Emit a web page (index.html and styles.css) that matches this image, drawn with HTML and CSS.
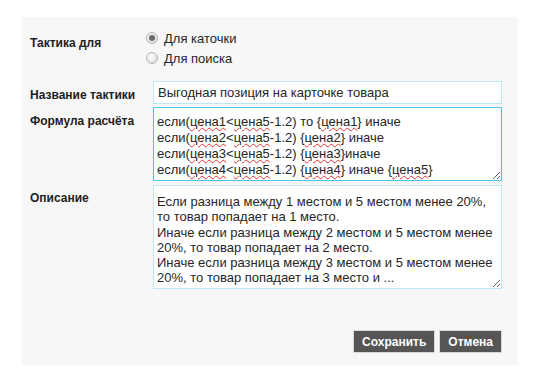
FILE: index.html
```html
<!DOCTYPE html>
<html lang="ru">
<head>
    <meta charset="UTF-8">
    <title>Тактика</title>
    <link rel="stylesheet" href="styles.css">
</head>
<body>
    <div class="panel">
        <form class="tactic-form">
            <div class="form-row">
                <div class="form-label label-radio">Тактика для</div>
                <div class="radio-group">
                    <label class="radio-item">
                        <input type="radio" name="target" checked>
                        <span>Для каточки</span>
                    </label>
                    <label class="radio-item">
                        <input type="radio" name="target">
                        <span>Для поиска</span>
                    </label>
                </div>
            </div>

            <div class="form-row">
                <div class="form-label label-field">Название тактики</div>
                <input type="text" class="text-input" value="Выгодная позиция на карточке товара">
            </div>

            <div class="form-row">
                <div class="form-label label-field">Формула расчёта</div>
                <div class="text-area formula focused">если(<span class="typo">цена1</span>&lt;<span class="typo">цена5</span>-1.2) то {<span class="typo">цена1</span>} иначе
если(<span class="typo">цена2</span>&lt;<span class="typo">цена5</span>-1.2) {<span class="typo">цена2</span>} иначе
если(<span class="typo">цена3</span>&lt;<span class="typo">цена5</span>-1.2) {<span class="typo">цена3</span>}иначе
если(<span class="typo">цена4</span>&lt;<span class="typo">цена5</span>-1.2) {<span class="typo">цена4</span>} иначе {<span class="typo">цена5</span>}</div>
            </div>

            <div class="form-row">
                <div class="form-label label-field">Описание</div>
                <div class="text-area description">Если разница между 1 местом и 5 местом менее 20%,
то товар попадает на 1 место.
Иначе если разница между 2 местом и 5 местом менее
20%, то товар попадает на 2 место.
Иначе если разница между 3 местом и 5 местом менее
20%, то товар попадает на 3 место и ...</div>
            </div>

            <div class="actions">
                <button type="button" class="btn">Сохранить</button>
                <button type="button" class="btn">Отмена</button>
            </div>
        </form>
    </div>
</body>
</html>
```

FILE: styles.css
```css
* {
    margin: 0;
    padding: 0;
    box-sizing: border-box;
}

body {
    font-family: "Liberation Sans", Arial, sans-serif;
    background: #ffffff;
    color: #262626;
}

.panel {
    margin: 17px 0 0 22px;
    width: 496px;
    height: 348px;
    background: #f7f7f7;
    padding: 11px 16px 0 8px;
}

.tactic-form {
    display: flex;
    flex-direction: column;
    gap: 3px;
}

.form-row {
    display: grid;
    grid-template-columns: 123px 349px;
}

.form-label {
    font-size: 12px;
    font-weight: 700;
    color: #1e1e1e;
}

.label-radio {
    padding-top: 8px;
}

.label-field {
    padding-top: 7px;
}

.radio-group {
    display: flex;
    flex-direction: column;
    margin-left: -7px;
    margin-bottom: 10px;
}

.radio-item {
    display: flex;
    align-items: center;
    gap: 6px;
    height: 20px;
    font-size: 13px;
    cursor: pointer;
}

.radio-item input {
    appearance: none;
    -webkit-appearance: none;
    width: 12px;
    height: 12px;
    border-radius: 50%;
    border: 1px solid #b5b5b5;
    background: radial-gradient(circle at 40% 35%, #ffffff 0%, #e2e2e2 70%, #d0d0d0 100%);
    position: relative;
    margin: 0;
}

.radio-item input:checked::after {
    content: '';
    position: absolute;
    left: 2px;
    top: 2px;
    width: 6px;
    height: 6px;
    border-radius: 50%;
    background: #6a6a6a;
}

.text-input {
    height: 23px;
    border: 1px solid #bfe6f5;
    background: #ffffff;
    padding: 0 4px;
    font-family: inherit;
    font-size: 13px;
    color: #262626;
    outline: none;
}

.text-area {
    border: 1px solid #bfe6f5;
    background: #ffffff;
    padding: 4px 3px;
    font-size: 13px;
    line-height: 16px;
    white-space: pre;
    overflow: hidden;
    resize: both;
}

.text-area.focused {
    border-color: #4cc3ea;
}

.formula {
    height: 74px;
    padding-top: 6px;
}

.description {
    height: 104px;
    margin-top: 1px;
    padding-top: 8px;
    line-height: 15.3px;
}

.typo {
    text-decoration: underline wavy #e03030;
    text-decoration-thickness: 1px;
    text-underline-offset: 1px;
}

.actions {
    display: flex;
    justify-content: flex-end;
    gap: 4px;
    margin-top: 38px;
}

.btn {
    height: 23px;
    padding: 0 8px;
    background: #555555;
    border: 1px solid #d8d8d8;
    color: #ffffff;
    font-family: inherit;
    font-size: 12px;
    font-weight: 700;
    cursor: pointer;
}

.btn:hover {
    background: #444444;
}
```
